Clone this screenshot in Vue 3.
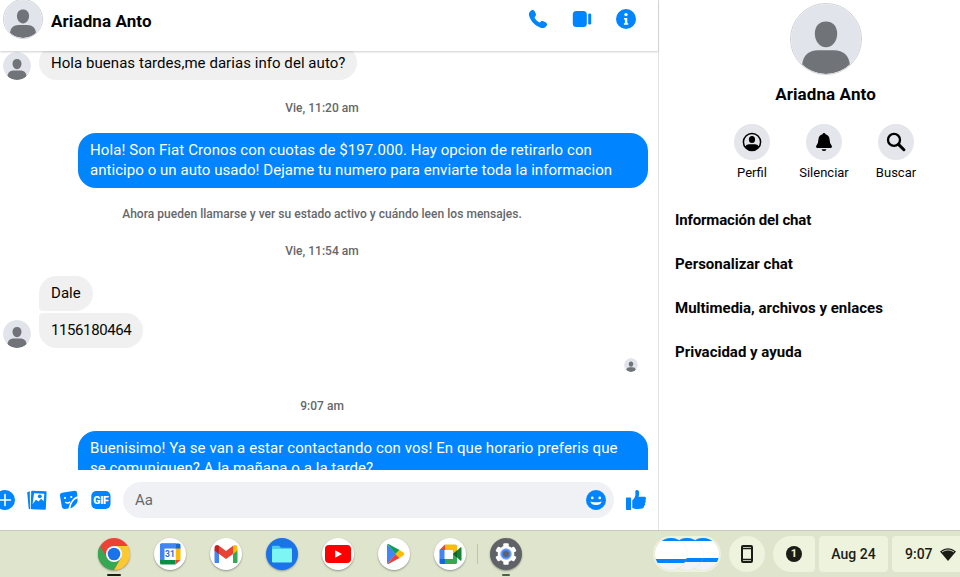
<template>
  <div class="desktop">
    <div class="messenger">
      <main class="chat">
        <header class="chat-header">
          <svg class="avatar avatar-md" viewBox="0 0 72 72"><use href="#person" /></svg>
          <h1 class="chat-name">{{ contact }}</h1>
          <div class="call-actions">
            <svg width="20" height="20" viewBox="0 0 20 20"><path d="M3.2 1.4C4.6.4 6.1 1 6.8 2.5l1 2.2c.6 1.4-.2 2.3-.9 3-.5.6-.3 1.1.1 1.7 1 1.5 2.100 2.600 3.600 3.600.6.4 1.100.6 1.700.1.7-.7 1.600-1.500 3-.9l2.200 1c1.500.7 2.100 2.200 1.100 3.600-1.200 1.700-3.100 2.800-5.400 2.100C7.400 17.200 2.800 12.600 1.100 6.800.4 4.500 1.500 2.600 3.200 1.400z" /></svg>
            <svg width="20" height="20" viewBox="0 0 20 20"><rect x=".8" y="2" width="14" height="16" rx="3.500" /><rect x="16.200" y="4.500" width="3" height="11" rx="1.300" /></svg>
            <svg width="20" height="20" viewBox="0 0 20 20"><circle cx="10" cy="10" r="10" /><circle cx="10" cy="5.600" r="1.700" fill="#fff" /><path d="M8 9h3.300v5.200h.9v1.500H7.900v-1.500h1V10.500H8z" fill="#fff" /></svg>
          </div>
        </header>

        <section class="log">
          <div v-for="(row, i) in rows" :key="i" :class="['row', 'row-' + row.type]">
            <template v-if="row.type === 'in'">
              <svg class="avatar avatar-sm" viewBox="0 0 72 72"><use href="#person" /></svg>
              <div class="group">
                <div v-for="text in row.texts" :key="text" class="bubble" :class="{ digits: /^\d+$/.test(text) }">{{ text }}</div>
              </div>
            </template>
            <div v-else-if="row.type === 'out'" class="bubble">
              <div v-for="line in row.lines" :key="line">{{ line }}</div>
            </div>
            <svg v-else-if="row.type === 'seen'" class="avatar avatar-xs" viewBox="0 0 72 72"><use href="#person" /></svg>
            <span v-else>{{ row.text }}</span>
          </div>
        </section>

        <footer class="composer">
          <div class="tools">
            <svg width="20" height="20" viewBox="0 0 20 20"><circle cx="10" cy="10" r="10" /><path d="M10 4.500v11M4.500 10h11" stroke="#fff" stroke-width="1.600" stroke-linecap="round" /></svg>
            <svg width="20" height="20" viewBox="0 0 20 20">
              <path d="M.2 2.200 2.800 1.300 3 19.200 1.700 18.800z" />
              <path d="M5 .8 18.600 1.300q1 .1 1 1L18.800 19q-.1.900-1 .8L4.500 19.200q-.9-.1-.8-1L4.200 1.500q.1-.7.800-.7z" />
              <path d="M7 3.200 17.300 3.800 16.700 11.300 14.100 8.700 11.500 11.600 9 9.700 5.600 14z" fill="#fff" /><circle cx="12.800" cy="6.300" r="1.900" />
            </svg>
            <svg width="20" height="20" viewBox="0 0 20 20">
              <path d="M3 2.700 15.600.7q2.300-.1 2.500 2l.3 3.500q-6.600 2-9 12.400L5.700 18.900q-2.300.1-2.800-2L.9 5.500Q.7 3.200 3 2.700z" />
              <path d="M18.500 8.200q.7 3.700-1.500 6-2.300 2.900-5.600 4.300.8-7.700 7.100-10.300z" />
              <circle cx="6" cy="8" r="1.100" fill="#fff" /><circle cx="12.300" cy="7" r="1.100" fill="#fff" /><path d="M6.300 12q2.400 2.300 5-.2" fill="none" stroke="#fff" stroke-width="1.400" />
            </svg>
            <svg width="20" height="20" viewBox="0 0 20 20"><rect x=".3" y="1" width="19.200" height="18" rx="5" /><text x="9.900" y="14" text-anchor="middle" class="gif">GIF</text></svg>
          </div>
          <div class="input">
            <span>Aa</span>
            <svg width="20" height="20" viewBox="0 0 20 20"><circle cx="10" cy="10" r="10" /><circle cx="6.300" cy="7.900" r="1.300" fill="#fff" /><circle cx="13.700" cy="7.900" r="1.300" fill="#fff" /><path d="M4.400 11.400q5.600 1.700 11.200 0-.8 3.500-5.600 3.500-4.800 0-5.600-3.500z" fill="#fff" /></svg>
          </div>
          <svg class="like" width="20" height="20" viewBox="0 0 20 20"><path d="M.7 7.500h3.600q.7 0 .7.700V20H.7Q0 20 0 19.300V8.200q0-.7.700-.7z" /><path d="M6.300 10.200Q10 7.500 9.300 2.300 9 .1 10.800 0q2.800 0 2.300 4.300-.2 1.500-.6 2.500h6q1.700.3 1.500 2 0 1-.7 1.400.8.700.3 2.100-.3.700-.8 1 .5.800 0 1.900-.3.600-.8.900.3 2.200-1.900 2.500-3.200.6-6.500.3-1.800-.3-3.300-1z" /></svg>
        </footer>
      </main>

      <aside class="info">
        <svg class="avatar avatar-lg" viewBox="0 0 72 72"><use href="#person" /></svg>
        <h2 class="info-name">{{ contact }}</h2>
        <div class="shortcuts">
          <div v-for="s in shortcuts" :key="s.label" class="shortcut">
            <span class="shortcut-icon">
              <svg v-if="s.icon === 'profile'" width="20" height="20" viewBox="0 0 20 20"><circle cx="10" cy="10" r="8.600" fill="none" stroke="#000" stroke-width="1.500" /><ellipse cx="10" cy="7.600" rx="3.100" ry="3.500" /><path d="M3.200 14.400Q4.500 12.300 7 12.300h6q2.500 0 3.800 2.100Q14.500 18.600 10 18.700 5.500 18.600 3.200 14.400z" /></svg>
              <svg v-else-if="s.icon === 'bell'" width="20" height="20" viewBox="0 0 20 20"><path d="M10 1q1.200 0 1.500 1.300 3.700 1 4.100 5.300.2 3.600 1.500 5.200 1 1.100.8 2.200-.2 1-1.400 1h-13Q2.300 16 2.100 15q-.2-1.100.8-2.200 1.300-1.600 1.500-5.200.4-4.300 4.100-5.300Q8.800 1 10 1zM7.500 17.200h5q-.8 1.900-2.500 1.900t-2.500-1.900z" /></svg>
              <svg v-else width="20" height="20" viewBox="0 0 20 20"><circle cx="8" cy="7.900" r="6" fill="none" stroke="#000" stroke-width="2.300" /><path d="m12.500 12.400 5.400 5.300" stroke="#000" stroke-width="3" stroke-linecap="round" /></svg>
            </span>
            <span>{{ s.label }}</span>
          </div>
        </div>
        <ul class="menu">
          <li v-for="item in menu" :key="item">{{ item }}</li>
        </ul>
      </aside>
    </div>

    <div class="shelf">
      <div class="apps">
        <span class="app running">
          <svg viewBox="0 0 32 32"><circle cx="16" cy="16" r="16" fill="#ea4335" /><path d="M2.100 8A16 16 0 0 0 16 32L23 20H9z" fill="#34a853" /><path d="M16 32A16 16 0 0 0 29.900 8H16l7 12z" fill="#fbc934" /><circle cx="16" cy="16" r="8" fill="#fff" /><circle cx="16" cy="16" r="6.300" fill="#1a73e8" /></svg>
        </span>
        <span class="app">
          <svg viewBox="0 0 32 32"><path d="M6 7q0-1.500 1.500-1.500H25q1.500 0 1.500 1.500v4H6z" fill="#1967d2" /><path d="M6 7q0-1.500 1.500-1.500H22v5H11V22H6z" fill="#4285f4" /><path d="M21.500 10.500h5V22h-5z" fill="#fbbc04" /><path d="M6 22h15.500v4.500h-14Q6 26.500 6 25z" fill="#0a8f45" /><path d="M21.500 22h5l-5 4.500z" fill="#ea4335" /><path d="M10.500 10.500h11V22h-11z" fill="#fff" /><text x="16" y="19.300" text-anchor="middle" class="day">31</text></svg>
        </span>
        <span class="app">
          <svg viewBox="0 0 32 32"><path d="M4.500 12 9 14v11H5.500q-1 0-1-1z" fill="#4285f4" /><path d="M23 14l4.500-2v12q0 1-1 1H23z" fill="#34a853" /><path d="M4.500 10c0-3 2.800-3.600 4.500-2.300V16l-4.500-3.500z" fill="#c5221f" /><path d="M27.500 10c0-3-2.800-3.600-4.500-2.300V16l4.500-3.500z" fill="#fbbc04" /><path d="m9 7.700 7 5.300 7-5.300V16l-7 5-7-5z" fill="#ea4335" /></svg>
        </span>
        <span class="app files">
          <svg viewBox="0 0 32 32"><path d="M6 9q0-1.300 1.300-1.300H13l2 2h9.700Q26 9.700 26 11v2H6z" fill="#4acbe8" /><rect x="6" y="11" width="20" height="13.500" rx="1.300" fill="#7df5f5" /></svg>
        </span>
        <span class="app">
          <svg viewBox="0 0 32 32"><rect x="3" y="7" width="26" height="18" rx="4" fill="#f00" /><path d="m13.200 12.200 6.800 3.800-6.800 3.800z" fill="#fff" /></svg>
        </span>
        <span class="app">
          <svg viewBox="0 0 32 32"><path d="M9.500 6.300 18 16 9.500 25.700Q9 25.300 9 24.500v-17q0-.8.500-1.200z" fill="#4285f4" /><path d="M9.500 6.300q.8-.5 1.900.1L21.500 12 17.700 16z" fill="#0f9d58" /><path d="M9.500 25.700q.8.500 1.900-.1L21.500 20 17.700 16z" fill="#ea4335" /><path d="m21.300 11.900 4.200 2.700q1.700 1.400 0 2.800l-4.200 2.700-3.900-4.100z" fill="#fbbc04" /></svg>
        </span>
        <span class="app">
          <svg viewBox="0 0 32 32"><path d="M5.500 12h5v9h-5z" fill="#4285f4" /><path d="m5.500 12 5.500-5.500V12z" fill="#ea4335" /><path d="M11 6.500h10.500q1.500 0 1.500 1.500v7l-4 1v-4h-8z" fill="#fbbc04" /><path d="M5.500 21H11v5H7q-1.500 0-1.500-1.500z" fill="#1967d2" /><path d="M11 21h8v-5h4v8.500q0 1.500-1.500 1.500H11z" fill="#34a853" /><path d="m19 16 7.300-6.500q1.200-.7 1.200.7v11.600q0 1.400-1.200.7z" fill="#188038" /><path d="M19 16l4-3.600v7.200z" fill="#0d652d" /></svg>
        </span>
        <i class="divider"></i>
        <span class="app settings running dim">
          <svg viewBox="0 0 32 32">
            <g fill="#fff"><circle cx="16" cy="16" r="8.300" /><rect v-for="n in 6" :key="n" x="13.300" y="5.300" width="5.400" height="6" rx="1" :transform="`rotate(${n * 60} 16 16)`" /></g>
            <circle cx="16" cy="16" r="5.800" fill="#8ab4f8" /><circle cx="16" cy="16" r="4.700" fill="#4285f4" /><circle cx="16" cy="16" r="3" fill="#5f6368" />
          </svg>
        </span>
      </div>

      <div class="tray">
        <span class="pill previews"><i v-for="n in 3" :key="n" class="preview"></i></span>
        <span class="pill phone">
          <svg width="14" height="20" viewBox="0 0 14 20"><rect x="2" y="2" width="10" height="16" rx="1" fill="none" stroke="#1b1c16" stroke-width="2" /><path d="M2 4.500h10M2 15.500h10" stroke="#1b1c16" stroke-width="1.500" /></svg>
        </span>
        <span class="pill notice-pill"><b class="count">1</b></span>
        <span class="pill date-pill">Aug 24</span>
        <span class="pill status">
          9:07
          <svg width="16" height="13" viewBox="0 0 16 13"><path d="M0 3.500Q8-3 16 3.500L8 13z" fill="#1b1c16" /><path d="M2 3.900q6-3.900 12 0" fill="none" stroke="#edf3dc" stroke-width=".8" /></svg>
        </span>
      </div>
    </div>

    <svg width="0" height="0" class="defs">
      <clipPath id="round"><circle cx="36" cy="36" r="36" /></clipPath>
      <symbol id="person" viewBox="0 0 72 72">
        <g clip-path="url(#round)">
          <rect width="72" height="72" fill="#e1e4ea" />
          <path d="M36 18c7 0 11.500 5 11.500 12.500S42.500 44.500 36 44.500 24.500 38 24.500 30.500 29 18 36 18z" fill="#707378" />
          <path d="M11.500 72V62C12.500 53 18 47.500 28 47.500h16c10 0 15.500 5.500 16.500 14.500v10z" fill="#707378" />
        </g>
      </symbol>
    </svg>
  </div>
</template>

<script setup>
const contact = 'Ariadna Anto'

const rows = [
  { type: 'in', texts: ['Hola buenas tardes,me darias info del auto?'] },
  { type: 'first', text: 'Vie, 11:20 am' },
  { type: 'out', lines: ['Hola! Son Fiat Cronos con cuotas de $197.000. Hay opcion de retirarlo con', 'anticipo o un auto usado! Dejame tu numero para enviarte toda la informacion'] },
  { type: 'notice', text: 'Ahora pueden llamarse y ver su estado activo y cuándo leen los mensajes.' },
  { type: 'date', text: 'Vie, 11:54 am' },
  { type: 'in', texts: ['Dale', '1156180464'] },
  { type: 'seen' },
  { type: 'date', text: '9:07 am' },
  { type: 'out', lines: ['Buenisimo! Ya se van a estar contactando con vos! En que horario preferis que', 'se comuniquen? A la mañana o a la tarde?'] }
]

const shortcuts = [
  { icon: 'profile', label: 'Perfil' },
  { icon: 'bell', label: 'Silenciar' },
  { icon: 'search', label: 'Buscar' }
]

const menu = ['Información del chat', 'Personalizar chat', 'Multimedia, archivos y enlaces', 'Privacidad y ayuda']
</script>

<style>
body { margin: 0; overflow: hidden; }
</style>

<style scoped>
.desktop {
  width: 960px; height: 577px; overflow: hidden; display: flex; flex-direction: column;
  background: #fff; color: #050505; font-family: Roboto, "Liberation Sans", sans-serif; font-size: 15px;
}
.desktop * { box-sizing: border-box; }
svg { display: block; flex-shrink: 0; }
.defs { position: absolute; }
.messenger { height: 530px; display: flex; overflow: hidden; }

.chat { width: 659px; flex-shrink: 0; display: flex; flex-direction: column; border-right: 1px solid #e1e1e3; }
.chat-header {
  height: 51px; flex-shrink: 0; display: flex; align-items: flex-start; padding: 0 22px 0 3px;
  box-shadow: 0 1px 2px rgba(0, 0, 0, 0.2); position: relative; z-index: 1; background: #fff;
}
.avatar { border-radius: 50%; }
.avatar-md { width: 40px; height: 40px; margin-top: -1px; border: 1px solid #d0d3d7; }
.avatar-sm { width: 28px; height: 28px; }
.avatar-xs { width: 14px; height: 14px; }
.avatar-lg { width: 72px; height: 72px; border: 1px solid #cdd0d4; }
.chat-name { flex: 1; margin: 0 0 0 8px; font-size: 17px; line-height: 20px; padding-top: 11px; font-weight: 700; letter-spacing: 0.1px; }
.call-actions { display: flex; gap: 24px; padding-top: 9px; fill: #0084ff; }

.log { flex: 1; min-height: 0; overflow: hidden; margin-right: 10px; }
.row { display: flex; line-height: 20px; }
.row-in { align-items: flex-end; gap: 8px; padding-left: 3px; }
.row-in:first-child { margin-top: -6px; }
.row-in:first-child .bubble { padding: 8px 12px 7px; }
.group { display: flex; flex-direction: column; align-items: flex-start; gap: 2px; }
.bubble { padding: 7px 12px 8px; border-radius: 18px; background: #f0f0f0; white-space: nowrap; letter-spacing: 0.05px; }
.digits { letter-spacing: -0.4px; }
.group .bubble:first-child:not(:last-child) { border-bottom-left-radius: 4px; }
.group .bubble:last-child:not(:first-child) { border-top-left-radius: 4px; }
.row-out { justify-content: flex-end; }
.row-out .bubble { width: 570px; background: #0084ff; color: #fff; }
.row-out .bubble div:first-child { letter-spacing: 0.087px; }
.row-first, .row-date, .row-notice {
  justify-content: center; align-items: center; margin-right: 4px; height: 50px;
  font-size: 12px; font-weight: 500; color: #65676b; letter-spacing: 0.03px;
}
.row-first { height: 53px; padding-top: 2px; }
.row-notice { height: 38px; padding-top: 14px; }
.row-seen { justify-content: flex-end; height: 33px; padding: 10px 10px 0 0; }

.composer { height: 60px; flex-shrink: 0; display: flex; align-items: center; padding-right: 12px; fill: #0084ff; }
.tools { display: flex; gap: 12px; margin-left: -5px; }
.gif { font-size: 10.5px; font-weight: 900; fill: #fff; letter-spacing: -0.3px; }
.input {
  flex: 1; height: 36px; margin: 0 12px; padding: 0 8px 0 12px; border-radius: 18px; background: #f0f1f5;
  display: flex; align-items: center; justify-content: space-between; color: #65676b;
}

.info { width: 334px; flex-shrink: 0; display: flex; flex-direction: column; align-items: center; padding-top: 3px; }
.info-name { margin: 9px 1px 0 0; font-size: 17px; line-height: 20px; font-weight: 700; letter-spacing: 0.1px; }
.shortcuts { display: flex; margin: 20px 4px 0 0; font-size: 13px; line-height: 16px; }
.shortcut { width: 72px; display: flex; flex-direction: column; align-items: center; gap: 5px; }
.shortcut-icon { width: 36px; height: 36px; border-radius: 50%; background: #e4e6eb; display: grid; place-items: center; }
.menu { list-style: none; align-self: stretch; margin: 17px 0 0; padding: 0 16px; font-weight: 700; }
.menu li { height: 44px; line-height: 44px; }
.menu li:first-child { letter-spacing: -0.15px; }

.shelf { height: 47px; background: #dfe4cd; border-top: 1px solid #c8ccb9; display: flex; }
.apps { display: flex; align-items: flex-start; gap: 24px; padding: 7px 0 0 97.5px; }
.app { width: 32px; height: 32px; position: relative; border-radius: 50%; background: #fff; box-shadow: 0 1px 2px rgba(0, 0, 0, 0.35); }
.day { font-size: 8.5px; font-weight: 700; fill: #1a73e8; }
.files { background: #1a73e8; }
.settings { background: #5f6368; }
.running::after { content: ''; position: absolute; left: 9px; bottom: -6px; width: 14px; height: 2px; border-radius: 1px; background: #1b1c16; }
.dim::after { left: 12px; width: 8px; background: #4d6048; }
.divider { width: 1px; height: 20px; margin: 6px -12px 0 -12.5px; background: #bfc5ae; }

.tray { margin-left: auto; display: flex; padding-top: 5px; color: #1b1c16; font-size: 14px; font-weight: 500; }
.pill { height: 36px; display: flex; align-items: center; justify-content: center; background: #edf3dc; }
.previews { width: 68px; border-radius: 18px; margin-right: 8px; flex-direction: row-reverse; }
.preview {
  width: 32px; height: 32px; border-radius: 50%; margin-right: -16px; position: relative;
  background: linear-gradient(#0084ff 0 3px, #fff 3px 21px, #0084ff 21px 25px, #f1f3f4 25px);
  box-shadow: 0 0 1px #c4cac2;
}
.preview:nth-child(1), .preview:nth-child(2) {
  background: linear-gradient(#0084ff 0 3px, #fff 3px 20px, #0084ff 20px 24px, #f1f3f4 24px);
}
.preview:first-child { margin-right: 0; }
.phone { width: 36px; border-radius: 50%; margin-right: 8px; }
.notice-pill { width: 42px; border-radius: 18px 4px 4px 18px; margin-right: 4px; }
.count { width: 16px; height: 16px; border-radius: 50%; background: #1b1c16; color: #edf3dc; font-size: 11px; line-height: 16px; text-align: center; }
.date-pill { width: 69px; border-radius: 4px; margin-right: 4px; }
.status { width: 68px; border-radius: 4px 0 0 4px; padding-left: 13px; justify-content: flex-start; gap: 7px; }
</style>
